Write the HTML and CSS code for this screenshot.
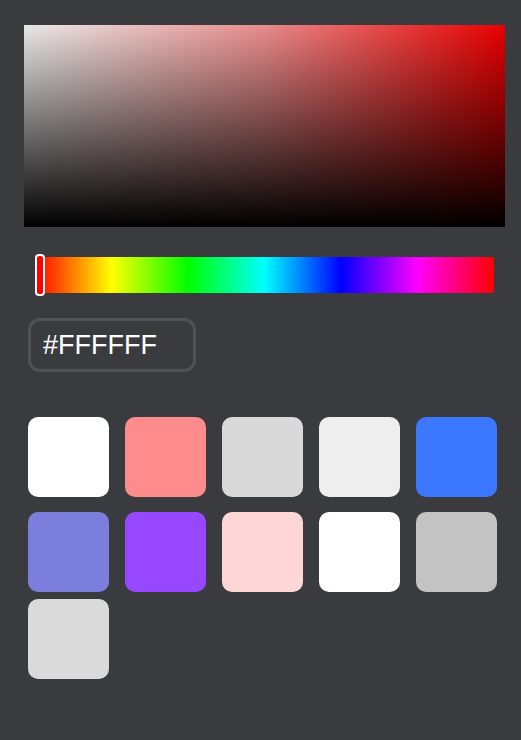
FILE: index.html
```html
<!DOCTYPE html>
<html lang="en">
<head>
<meta charset="utf-8">
<title>Color picker</title>
<link rel="stylesheet" href="styles.css">
</head>
<body>
<div class="picker">
  <div class="sv-box">
    <div class="sv-white"></div>
    <div class="sv-black"></div>
  </div>
  <div class="hue-row">
    <div class="hue-bar">
      <div class="hue-handle"></div>
    </div>
  </div>
  <div class="hex-input">#FFFFFF</div>
  <div class="swatches">
    <div class="swatch sw-white"></div>
    <div class="swatch sw-salmon"></div>
    <div class="swatch sw-grey"></div>
    <div class="swatch sw-light"></div>
    <div class="swatch sw-blue"></div>
    <div class="swatch sw-periwinkle"></div>
    <div class="swatch sw-purple"></div>
    <div class="swatch sw-pink"></div>
    <div class="swatch sw-white"></div>
    <div class="swatch sw-silver"></div>
    <div class="swatch sw-grey2"></div>
  </div>
</div>
</body>
</html>
```
FILE: styles.css
```css
html, body {
  margin: 0;
  padding: 0;
  background: #3a3b3e;
  width: 521px;
  height: 740px;
  overflow: hidden;
  font-family: "Liberation Sans", Arial, sans-serif;
}

.picker {
  display: flex;
  flex-direction: column;
  padding-top: 25px;
}

.sv-box {
  position: relative;
  margin-left: 24px;
  width: 481px;
  height: 202px;
  background: #ff0000;
}

.sv-white {
  position: absolute;
  inset: 0;
  background: linear-gradient(to right, #ffffff, rgba(255, 255, 255, 0.6) 50%, rgba(255, 255, 255, 0));
}

.sv-black {
  position: absolute;
  inset: 0;
  background: linear-gradient(to bottom, rgba(0, 0, 0, 0.09), #000000);
}

.hue-row {
  margin-top: 30px;
  padding-left: 35px;
}

.hue-bar {
  position: relative;
  width: 459px;
  height: 36px;
  border-radius: 3px;
  background: linear-gradient(to right,
    #ff0000 0%, #ffff00 16.67%, #00ff00 33.33%, #00ffff 50%,
    #0000ff 66.67%, #ff00ff 83.33%, #ff0000 100%);
}

.hue-handle {
  position: absolute;
  left: 0;
  top: -3px;
  width: 6px;
  height: 38px;
  border: 2px solid #ffffff;
  border-radius: 4px;
  background: #ff0000;
}

.hex-input {
  margin-top: 25px;
  margin-left: 28px;
  width: 150px;
  height: 48px;
  border: 3px solid #505257;
  border-radius: 12px;
  padding-left: 12px;
  color: #ffffff;
  font-size: 27px;
  line-height: 49px;
}

.swatches {
  margin-top: 45px;
  margin-left: 28px;
  display: grid;
  grid-template-columns: repeat(5, 81px);
  grid-auto-rows: 80px;
  column-gap: 16px;
  row-gap: 15px;
  align-items: start;
}

.swatch {
  height: 80px;
  border-radius: 10px;
}

.swatch:nth-child(n+11) {
  margin-top: -8px;
}

.sw-white { background: #ffffff; }
.sw-salmon { background: #ff8c8c; }
.sw-grey { background: #d9d9d9; }
.sw-light { background: #eeeeee; }
.sw-blue { background: #3b77ff; }
.sw-periwinkle { background: #7b7edc; }
.sw-purple { background: #9747ff; }
.sw-pink { background: #ffd6d8; }
.sw-silver { background: #c3c3c3; }
.sw-grey2 { background: #dadada; }
```
